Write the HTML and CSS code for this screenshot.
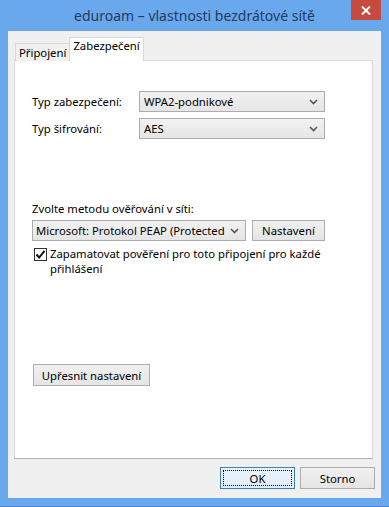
FILE: index.html
```html
<!DOCTYPE html>
<html lang="cs">
<head>
<meta charset="utf-8">
<link rel="stylesheet" href="styles.css">
</head>
<body>
<div class="window">
  <div class="titlebar">
    <div class="title">eduroam – vlastnosti bezdrátové sítě</div>
    <div class="close">
      <svg width="10" height="9" viewBox="0 0 10 9"><path d="M1 0.5 L9 8.5 M9 0.5 L1 8.5" stroke="#fff" stroke-width="2"/></svg>
    </div>
  </div>
  <div class="client">
    <div class="tabs">
      <div class="tab">Připojení</div>
      <div class="tab active">Zabezpečení</div>
    </div>
    <div class="panel">
      <div class="row first">
        <span class="label">Typ zabezpečení:</span>
        <div class="select wide"><span>WPA2-podnikové</span><svg class="chev" width="9" height="6" viewBox="0 0 9 6"><path d="M1 1 L4.5 4.5 L8 1" fill="none" stroke="#555" stroke-width="1.6"/></svg></div>
      </div>
      <div class="row">
        <span class="label">Typ šifrování:</span>
        <div class="select wide"><span>AES</span><svg class="chev" width="9" height="6" viewBox="0 0 9 6"><path d="M1 1 L4.5 4.5 L8 1" fill="none" stroke="#555" stroke-width="1.6"/></svg></div>
      </div>
      <div class="method-label">Zvolte metodu ověřování v síti:</div>
      <div class="method-row">
        <div class="select method"><span class="clip">Microsoft: Protokol PEAP (Protected EAP)</span><svg class="chev" width="9" height="6" viewBox="0 0 9 6"><path d="M1 1 L4.5 4.5 L8 1" fill="none" stroke="#555" stroke-width="1.6"/></svg></div>
        <div class="button set">Nastavení</div>
      </div>
      <div class="check-row">
        <div class="checkbox"><svg width="11" height="11" viewBox="0 0 11 11"><path d="M1.5 5.5 L4.2 8.5 L9.5 1.8" fill="none" stroke="#111" stroke-width="2"/></svg></div>
        <div class="check-text">Zapamatovat pověření pro toto připojení pro každé přihlášení</div>
      </div>
      <div class="button adv">Upřesnit nastavení</div>
    </div>
    <div class="footer">
      <div class="button dlg ok"><span class="focus">OK</span></div>
      <div class="button dlg">Storno</div>
    </div>
  </div>
</div>
</body>
</html>
```

FILE: styles.css
```css
html, body {
  margin: 0;
  padding: 0;
}
body {
  width: 389px;
  height: 507px;
  overflow: hidden;
  font-family: "Noto Sans", "Open Sans", sans-serif;
  font-size: 11.3px;
  color: #000;
}
.window {
  width: 389px;
  height: 507px;
  background: #6aa8ee;
  display: flex;
  flex-direction: column;
  box-sizing: border-box;
  border-bottom: 1px solid #4a86c8;
  position: relative;
}
.titlebar {
  height: 31px;
  display: flex;
  align-items: center;
  justify-content: center;
  flex: none;
}
.title {
  font-family: "Noto Sans", "Open Sans", sans-serif;
  font-size: 14px;
  color: #1f3b5c;
  margin-top: -1px;
}
.close {
  position: absolute;
  top: 0;
  right: 8px;
  width: 30px;
  height: 20px;
  background: #c74a3f;
  display: flex;
  align-items: center;
  justify-content: center;
}
.client {
  flex: 1;
  margin: 0 8px 8px 8px;
  background: #f0f0f0;
  padding: 7px 8px 0 6px;
  display: flex;
  flex-direction: column;
}
.tabs {
  display: flex;
  align-items: flex-end;
  height: 23px;
  padding-left: 1px;
  position: relative;
  z-index: 1;
  margin-bottom: -1px;
}
.tab {
  height: 18px;
  line-height: 17px;
  padding: 0 3px;
  box-sizing: border-box;
  border: 1px solid #d9d9d9;
  border-bottom: none;
  background: #f0f0f0;
  color: #000;
}
.tab.active {
  height: 24px;
  margin-left: -1px;
  line-height: 15px;
  padding: 0 3px;
  background: #fff;
  border-color: #d9d9d9;
}
.panel {
  height: 399px;
  box-sizing: border-box;
  background: #fff;
  border: 1px solid #d9d9d9;
  border-bottom-color: #adadad;
  padding: 30px 0 0 17px;
  display: flex;
  flex-direction: column;
}
.row {
  display: flex;
  align-items: center;
  height: 21px;
  margin-bottom: 6px;
}
.label {
  width: 107px;
}
.select {
  height: 21px;
  box-sizing: border-box;
  border: 1px solid #acacac;
  background: linear-gradient(#f2f2f2, #e5e5e5);
  display: flex;
  align-items: center;
  padding: 0 6px 0 4px;
  position: relative;
}
.select span {
  flex: 1;
  white-space: nowrap;
  overflow: hidden;
}
.select.wide {
  width: 186px;
}
.chev {
  flex: none;
}
.method-label {
  margin-top: 56px;
  height: 16px;
  line-height: 16px;
}
.method-row {
  display: flex;
  gap: 6px;
  margin-top: 3px;
}
.select.method {
  width: 214px;
  padding-left: 3px;
}
.select .clip {
  text-overflow: clip;
  margin-right: 4px;
}
.button {
  height: 21px;
  box-sizing: border-box;
  border: 1px solid #adadad;
  background: linear-gradient(#f0f0f0, #e5e5e5);
  display: flex;
  align-items: center;
  justify-content: center;
}
.button.set {
  width: 73px;
}
.check-row {
  display: flex;
  margin-top: 5px;
  margin-left: 2px;
}
.checkbox {
  width: 13px;
  height: 13px;
  box-sizing: border-box;
  border: 1px solid #333;
  background: #fff;
  margin-top: 2px;
  display: flex;
  align-items: center;
  justify-content: center;
  flex: none;
}
.check-text {
  width: 300px;
  margin-left: 3px;
  line-height: 15px;
}
.button.adv {
  width: 117px;
  height: 22px;
  margin-top: 88px;
  margin-left: 1px;
}
.footer {
  display: flex;
  justify-content: flex-end;
  gap: 5px;
  padding-top: 8px;
  margin-right: -2px;
}
.button.dlg {
  width: 75px;
  height: 22px;
}
.button.ok {
  border-color: #3c7fb1;
  background: linear-gradient(#eaf3fb, #e0ecf8);
  padding: 2px;
}
.focus {
  flex: 1;
  align-self: stretch;
  border: 1px dotted #000;
  display: flex;
  align-items: center;
  justify-content: center;
}
```
